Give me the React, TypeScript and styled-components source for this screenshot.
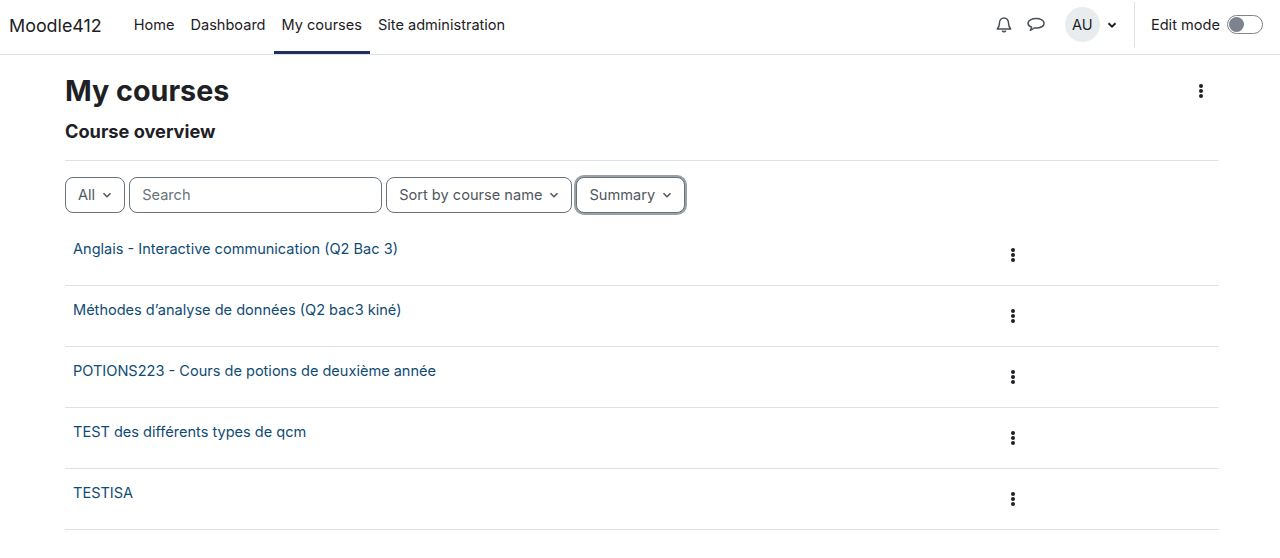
import React from 'react';
import styled, { createGlobalStyle } from 'styled-components';

const GlobalStyle = createGlobalStyle`
  html, body {
    margin: 0;
    padding: 0;
    height: 100%;
    overflow: hidden;
    background: #fff;
    font-family: Inter, "Liberation Sans", sans-serif;
    color: #1d2125;
  }
  * { box-sizing: border-box; }
`;

const NavBar = styled.nav`
  height: 55px;
  display: flex;
  align-items: stretch;
  border-bottom: 1px solid #dee2e6;
  padding: 0 17px 0 9px;
`;

const Brand = styled.a`
  font-size: 17.9px;
  line-height: 52px;
  margin-right: 24px;
  color: #1d2125;
`;

const NavLink = styled.a<{ $active?: boolean }>`
  font-size: 14.55px;
  line-height: 50px;
  padding: 0 8px;
  height: 54px;
  color: #1d2125;
  border-bottom: 3px solid ${({ $active }) => ($active ? '#1d2f5f' : 'transparent')};
`;

const NavRight = styled.div`
  margin-left: auto;
  height: 49px;
  display: flex;
  align-items: center;
`;

const IconButton = styled.span<{ $gap?: number }>`
  display: flex;
  align-items: center;
  justify-content: center;
  width: 20px;
  margin-left: ${({ $gap }) => $gap ?? 0}px;
  color: #495057;
`;

const Avatar = styled.span`
  width: 35px;
  height: 35px;
  margin-left: 19px;
  border-radius: 50%;
  background: #e9ecef;
  font-size: 14.6px;
  display: flex;
  align-items: center;
  justify-content: center;
`;

const Caret = styled.svg`
  display: block;
  flex: none;
`;

const UserCaret = styled(Caret)`
  margin: 0 17px 0 7px;
  color: #1d2125;
`;

const EditMode = styled.div`
  height: 45px;
  display: flex;
  align-items: center;
  gap: 7px;
  padding-left: 16px;
  border-left: 1px solid #dee2e6;
  font-size: 14.6px;
`;

const Toggle = styled.span`
  width: 36px;
  height: 19px;
  border: 1px solid #7f858c;
  border-radius: 10px;
  padding: 1px;
  display: flex;
`;

const Knob = styled.span`
  width: 15px;
  height: 15px;
  border-radius: 50%;
  background: #7d838e;
`;

const Page = styled.main`
  padding: 0 61px 0 65px;
`;

const HeaderRow = styled.header`
  display: flex;
  align-items: center;
  justify-content: space-between;
  height: 70px;
  padding: 2px 16px 0 0;
`;

const Title = styled.h1`
  margin: 0;
  font-size: 28.7px;
  font-weight: 700;
  line-height: 62px;
`;

const SectionTitle = styled.h2`
  margin: 0;
  height: 36px;
  font-size: 18.2px;
  font-weight: 700;
  line-height: 12px;
  border-bottom: 1px solid #dee2e6;
`;

const Filters = styled.div`
  display: flex;
  gap: 4px;
  margin-top: 16px;
`;

const FilterButton = styled.div<{ $focused?: boolean }>`
  height: 36px;
  display: flex;
  align-items: center;
  justify-content: space-between;
  padding: 0 12px;
  border: 1px solid #6a737b;
  border-radius: 8px;
  font-size: 14.6px;
  color: #50575e;
  background: #fff;
  gap: 7px;
  box-shadow: ${({ $focused }) => ($focused ? '0 0 0 2px #98a0a8' : 'none')};
`;

const SearchBox = styled(FilterButton)`
  width: 253px;
  color: #6a737b;
`;

const CourseList = styled.ul`
  list-style: none;
  margin: 12px 0 0;
  padding: 0;
`;

const CourseRow = styled.li`
  height: 61px;
  padding: 0 8px;
  display: flex;
  justify-content: space-between;
  border-bottom: 1px solid #dee2e6;
`;

const CourseLink = styled.a`
  color: #0f4c75;
  font-size: 14.55px;
  line-height: 17px;
  padding-top: 16px;
`;

const RowMenu = styled.span`
  width: 200px;
  padding-top: 23px;
  color: #1d2125;
`;

const DotsIcon = styled.svg`
  display: block;
`;

const Dots = () => (
  <DotsIcon width="4" height="14" viewBox="0 0 4 14" fill="currentColor">
    <circle cx="2" cy="2" r="2" />
    <circle cx="2" cy="7" r="2" />
    <circle cx="2" cy="12" r="2" />
  </DotsIcon>
);

const Chevron = () => (
  <Caret width="10" height="10" viewBox="0 0 10 10" fill="none" stroke="currentColor" strokeWidth="1.6">
    <path d="M1.5 3.2 5 6.7l3.5-3.5" />
  </Caret>
);

const courses = [
  'Anglais - Interactive communication (Q2 Bac 3)',
  'Méthodes d’analyse de données (Q2 bac3 kiné)',
  'POTIONS223 - Cours de potions de deuxième année',
  'TEST des différents types de qcm',
  'TESTISA',
];

export default function App() {
  return (
    <>
      <GlobalStyle />
      <NavBar>
        <Brand>Moodle412</Brand>
        <NavLink>Home</NavLink>
        <NavLink>Dashboard</NavLink>
        <NavLink $active>My courses</NavLink>
        <NavLink>Site administration</NavLink>
        <NavRight>
          <IconButton>
            <svg width="16" height="17" viewBox="0 0 16 17" fill="none" stroke="currentColor" strokeWidth="1.5">
              <path d="M1.2 13h13.6c-1.5-1.4-2.2-3-2.2-5.6 0-3-1.9-5.4-4.6-5.4S3.4 4.4 3.4 7.4c0 2.6-.7 4.2-2.2 5.6Z" strokeLinejoin="round" />
              <path d="M6.2 14.6c.4.8 1 1.1 1.8 1.1s1.4-.3 1.8-1.1" />
            </svg>
          </IconButton>
          <IconButton $gap={12}>
            <svg width="18" height="16" viewBox="0 0 18 16" fill="none" stroke="currentColor" strokeWidth="1.5">
              <path d="M9.2 1.5c4.3 0 7.9 2 7.9 4.8s-3.600 4.800-7.900 4.800c-.7 0-1.300-.1-2-.2-.8 1-2.100 1.900-3.900 2.400.8-.9 1.200-1.800 1.300-3C2.500 9.400 1 8 1 6.300 1 3.500 4.900 1.500 9.200 1.500Z" strokeLinejoin="round" />
            </svg>
          </IconButton>
          <Avatar>AU</Avatar>
          <UserCaret width="10" height="10" viewBox="0 0 10 10" fill="none" stroke="currentColor" strokeWidth="2">
            <path d="M1.5 3.2 5 6.7l3.5-3.5" />
          </UserCaret>
          <EditMode>
            Edit mode
            <Toggle>
              <Knob />
            </Toggle>
          </EditMode>
        </NavRight>
      </NavBar>
      <Page>
        <HeaderRow>
          <Title>My courses</Title>
          <Dots />
        </HeaderRow>
        <SectionTitle>Course overview</SectionTitle>
        <Filters>
          <FilterButton>
            All <Chevron />
          </FilterButton>
          <SearchBox>Search</SearchBox>
          <FilterButton>
            Sort by course name <Chevron />
          </FilterButton>
          <FilterButton $focused>
            Summary <Chevron />
          </FilterButton>
        </Filters>
        <CourseList>
          {courses.map((name) => (
            <CourseRow key={name}>
              <CourseLink>{name}</CourseLink>
              <RowMenu>
                <Dots />
              </RowMenu>
            </CourseRow>
          ))}
        </CourseList>
      </Page>
    </>
  );
}
